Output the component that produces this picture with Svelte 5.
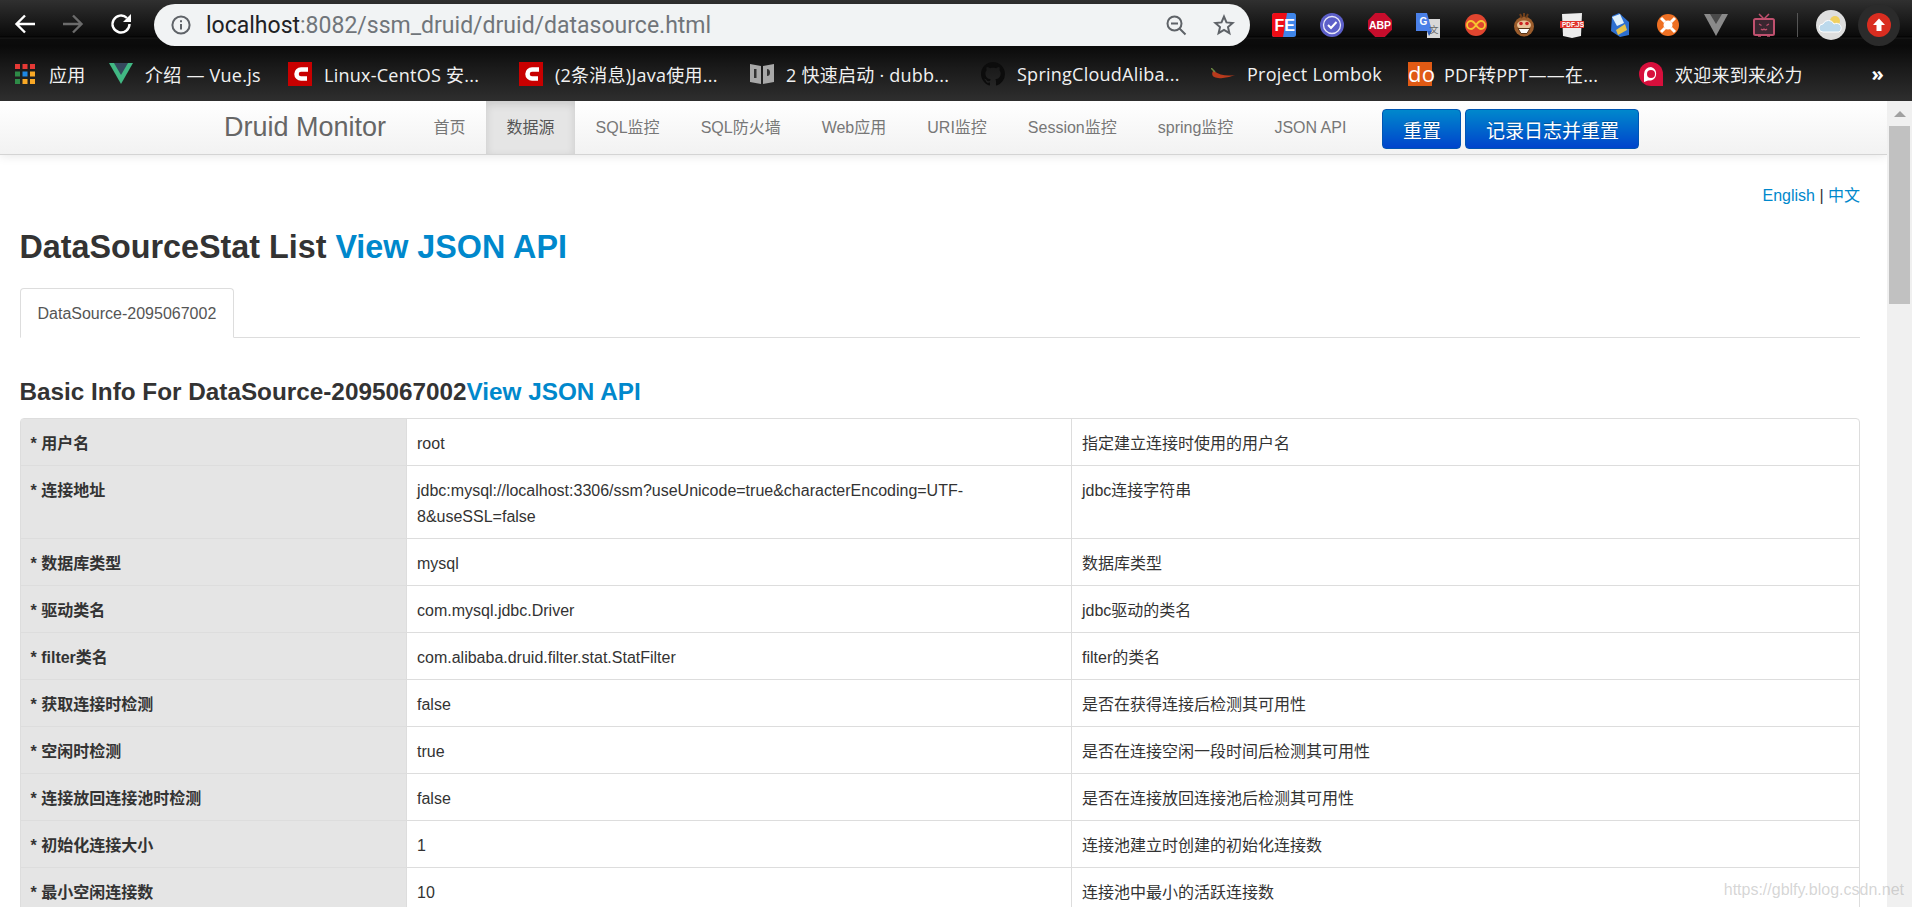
<script>
  const navItems = ['首页', '数据源', 'SQL监控', 'SQL防火墙', 'Web应用', 'URI监控', 'Session监控', 'spring监控', 'JSON API'];

  const bookmarks = [
    { icon: 'apps', label: '应用', width: 94 },
    { icon: 'vue', label: '介绍 — Vue.js', width: 179 },
    { icon: 'csdn', label: 'Linux-CentOS 安...', width: 231 },
    { icon: 'csdn', label: '(2条消息)Java使用...', width: 231 },
    { icon: 'book', label: '2 快速启动 · dubb...', width: 231 },
    { icon: 'github', label: 'SpringCloudAliba...', width: 230 },
    { icon: 'chili', label: 'Project Lombok', width: 197 },
    { icon: 'do', label: 'PDF转PPT——在...', width: 231 },
    { icon: 'laibi', label: '欢迎来到来必力', width: 200 }
  ];

  const appColors = ['#e53935', '#e53935', '#e53935', '#2e8b47', '#1e88e5', '#f9a825', '#2e8b47', '#f9a825', '#f9a825'];

  const rows = [
    ['用户名', 'root', '指定建立连接时使用的用户名'],
    ['连接地址', 'jdbc:mysql://localhost:3306/ssm?useUnicode=true&characterEncoding=UTF-8&useSSL=false', 'jdbc连接字符串'],
    ['数据库类型', 'mysql', '数据库类型'],
    ['驱动类名', 'com.mysql.jdbc.Driver', 'jdbc驱动的类名'],
    ['filter类名', 'com.alibaba.druid.filter.stat.StatFilter', 'filter的类名'],
    ['获取连接时检测', 'false', '是否在获得连接后检测其可用性'],
    ['空闲时检测', 'true', '是否在连接空闲一段时间后检测其可用性'],
    ['连接放回连接池时检测', 'false', '是否在连接放回连接池后检测其可用性'],
    ['初始化连接大小', '1', '连接池建立时创建的初始化连接数'],
    ['最小空闲连接数', '10', '连接池中最小的活跃连接数']
  ];
</script>

<div class="window">
  <header class="toolbar">
    <div class="navbtns">
      <svg width="24" height="24" viewBox="0 0 24 24"><path d="M22 12H4M12 3.500L3.500 12l8.500 8.500" fill="none" stroke="#fff" stroke-width="2.400"/></svg>
      <svg width="24" height="24" viewBox="0 0 24 24"><path d="M2 12h18M12 3.500l8.500 8.500-8.500 8.500" fill="none" stroke="#6b6b6b" stroke-width="2.400"/></svg>
      <svg width="24" height="24" viewBox="0 0 24 24"><path d="M20.500 12a8.500 8.500 0 1 1-2.500-6" fill="none" stroke="#fff" stroke-width="2.400"/><path d="M22 2v8h-8z" fill="#fff"/></svg>
    </div>
    <div class="omnibox">
      <svg class="info" width="20" height="20" viewBox="0 0 20 20"><circle cx="10" cy="10" r="8.600" fill="none" stroke="#5f6368" stroke-width="2"/><path d="M10 9v5.500M10 5.300v1.900" stroke="#5f6368" stroke-width="2"/></svg>
      <span class="url"><b>localhost</b>:8082/ssm_druid/druid/datasource.html</span>
      <svg width="22" height="22" viewBox="0 0 22 22"><circle cx="9.500" cy="9.500" r="7" fill="none" stroke="#5f6368" stroke-width="2"/><path d="M6 9.500h7M14.500 14.500l6 6" stroke="#5f6368" stroke-width="2" fill="none"/></svg>
      <svg class="star" width="22" height="22" viewBox="0 0 22 22"><path d="M11 2.600l2.500 5.800 6.200.6-4.700 4.100 1.400 6.100L11 15.900l-5.400 3.300L7 13.100 2.300 9l6.200-.6z" fill="none" stroke="#5f6368" stroke-width="2"/></svg>
    </div>
    <div class="extensions">
      <span class="slot"><svg width="24" height="24" viewBox="0 0 24 24"><rect width="24" height="24" rx="2.500" fill="#3f86ea"/><path d="M2.500 0H15l-4 24H2.500A2.500 2.500 0 0 1 0 21.500v-19A2.500 2.500 0 0 1 2.500 0z" fill="#ee0d16"/><text x="2.500" y="18" font-size="16" font-weight="700" fill="#fff" font-family="Liberation Sans">FE</text></svg></span>
      <span class="slot"><svg width="24" height="24" viewBox="0 0 24 24"><circle cx="12" cy="12" r="12" fill="#5c5fc9"/><circle cx="12" cy="12" r="8.500" fill="none" stroke="#e8e8f8" stroke-width="1.300"/><path d="M8 12l3 3 5.500-6" fill="none" stroke="#fff" stroke-width="2"/></svg></span>
      <span class="slot"><span class="abp">ABP</span></span>
      <span class="slot"><svg width="24" height="25" viewBox="0 0 24 25"><path d="M11 6h13v19H11z" fill="#d8d8d8"/><path d="M0 0h11l5 18H0z" fill="#4a80e8"/><path d="M11 18h5l-3 5z" fill="#2f5fbf"/><text x="3.500" y="12" font-size="10" font-weight="700" fill="#fff" font-family="Liberation Sans">G</text><text x="13.500" y="20" font-size="9" fill="#666" font-family="Noto Sans CJK SC">文</text></svg></span>
      <span class="slot"><svg width="24" height="24" viewBox="0 0 24 24"><circle cx="12" cy="12" r="11" fill="#e0452f"/><path d="M12 12c-2-3-3.500-4-5-4a4 4 0 0 0 0 8c1.500 0 3-1 5-4zm0 0c2 3 3.500 4 5 4a4 4 0 0 0 0-8c-1.500 0-3 1-5 4z" fill="none" stroke="#f7c531" stroke-width="1.800"/></svg></span>
      <span class="slot"><svg width="22" height="24" viewBox="0 0 22 24"><circle cx="11" cy="13.500" r="10" fill="#9c5d2c"/><path d="M7 1l2 4M11 0v4M15 1l-2 4" stroke="#6e3f1c" stroke-width="2"/><ellipse cx="11" cy="12" rx="7" ry="4.500" fill="#e8c39a"/><circle cx="8" cy="10.500" r="1.800" fill="#c22"/><circle cx="14" cy="10.500" r="1.800" fill="#c22"/><path d="M5 15.500h12l-3 5H8z" fill="#fff" stroke="#5a3518"/></svg></span>
      <span class="slot"><svg width="24" height="25" viewBox="0 0 24 25"><path d="M2 1l20-1-1 23-9 2-9-2z" fill="#ececec"/><path d="M0 8h24v7H0z" fill="#e0332b"/><text x="2" y="13.600" font-size="6.500" font-weight="700" fill="#fff" font-family="Liberation Sans">PDF.JS</text></svg></span>
      <span class="slot"><svg width="22" height="26" viewBox="0 0 22 26"><path d="M3 4l7-3 10 9v13l-9 2-9-6z" fill="#2d6fd0"/><path d="M3 5l8-3 4 9-7 3z" fill="#dff0fb"/><path d="M7 18l9-6 2 6-9 5z" fill="#e8c34a"/></svg></span>
      <span class="slot"><svg width="24" height="24" viewBox="0 0 24 24"><circle cx="12" cy="12" r="11" fill="#ee7023"/><circle cx="12" cy="12" r="4.500" fill="#fff"/><path d="M5 5l4 4M19 5l-4 4M5 19l4-4M19 19l-4-4" stroke="#fff" stroke-width="3"/></svg></span>
      <span class="slot"><svg width="24" height="22" viewBox="0 0 24 22"><path d="M0 0h24L12 22z" fill="#8a8a8a"/><path d="M6 0h12l-6 10z" fill="#4a4a4a"/></svg></span>
      <span class="slot"><svg width="22" height="24" viewBox="0 0 22 24"><path d="M6 1l5 5 5-5" fill="none" stroke="#c0506e" stroke-width="1.500"/><rect x="1" y="6" width="20" height="16" rx="1.500" fill="#3a2630" stroke="#c0506e" stroke-width="2"/><path d="M5 23h3M14 23h3" stroke="#c0506e" stroke-width="1.500"/><path d="M6 11l2.500 1.500M16 11l-2.500 1.500M8 16q1.500 1.500 3 0 1.500 1.500 3 0" fill="none" stroke="#c0506e" stroke-width="1.200"/></svg></span>
      <span class="sep"></span>
      <span class="slot"><svg width="30" height="30" viewBox="0 0 30 30"><circle cx="15" cy="15" r="15" fill="#dedede"/><circle cx="19" cy="11" r="5" fill="#f0d060"/><path d="M7 22a4 4 0 0 1 0-8 6 6 0 0 1 11 0 4 4 0 0 1 5 8z" fill="#bcd9ec" stroke="#fff"/></svg></span>
      <span class="slot"><span class="update"><svg width="24" height="24" viewBox="0 0 24 24"><circle cx="12" cy="12" r="12" fill="#d92d20"/><path d="M12 5.500l6 6.500h-3.500v6h-5v-6H6z" fill="#fff"/></svg></span></span>
    </div>
  </header>

  <nav class="bookmarks">
    {#each bookmarks as b}
      <span class="bookmark" style="width: {b.width}px">
        {#if b.icon === 'apps'}
          <svg class="bm-icon apps" width="20" height="20" viewBox="0 0 20 20">
            {#each appColors as color, i}
              <rect x={(i % 3) * 7.500} y={Math.floor(i / 3) * 7.500} width="5" height="5" fill={color} />
            {/each}
          </svg>
        {:else if b.icon === 'vue'}
          <svg class="bm-icon" width="24" height="21" viewBox="0 0 24 21"><path d="M0 0h24L12 21z" fill="#41b883"/><path d="M5 0h14l-7 12z" fill="#35495e"/></svg>
        {:else if b.icon === 'csdn'}
          <svg class="bm-icon" width="24" height="24" viewBox="0 0 24 24"><rect width="24" height="24" fill="#c80000"/><path d="M20 7.500h-7a4.500 4.500 0 0 0 0 9h6" fill="none" stroke="#fff" stroke-width="4.500"/></svg>
        {:else if b.icon === 'book'}
          <svg class="bm-icon" width="24" height="22" viewBox="0 0 24 22"><path d="M0 1l11 2v18L0 19zM24 1l-11 2v18l11-2z" fill="#a8a8a8"/><path d="M4 6v9h2.500V6zM17 6q3 0 3 3.500T17 13z" fill="#333"/></svg>
        {:else if b.icon === 'github'}
          <svg class="bm-icon" width="24" height="24" viewBox="0 0 16 16"><path fill="#0c0c0c" d="M8 0C3.580 0 0 3.580 0 8c0 3.540 2.290 6.530 5.470 7.590.4.070.55-.17.55-.38 0-.19-.01-.82-.01-1.490-2.010.37-2.530-.49-2.690-.94-.09-.23-.48-.94-.82-1.130-.28-.15-.68-.52-.01-.53.63-.01 1.080.58 1.230.82.72 1.210 1.870.87 2.330.66.07-.52.28-.87.51-1.070-1.780-.2-3.640-.89-3.640-3.950 0-.87.31-1.590.82-2.150-.08-.2-.36-1.020.08-2.120 0 0 .67-.21 2.200.82.640-.18 1.320-.27 2-.27s1.360.09 2 .27c1.530-1.040 2.200-.82 2.200-.82.440 1.100.16 1.920.08 2.120.510.560.820 1.270.820 2.150 0 3.070-1.870 3.750-3.650 3.950.290.250.540.730.540 1.480 0 1.070-.010 1.930-.010 2.200 0 .210.150.460.550.380A8.010 8.010 0 0 0 16 8c0-4.420-3.580-8-8-8z"/></svg>
        {:else if b.icon === 'chili'}
          <svg class="bm-icon" width="24" height="12" viewBox="0 0 24 12"><path d="M3 3q8 6 21 4-9 4-17 3T2 3z" fill="#b83a1c"/><path d="M0 0l4 4" stroke="#6d8a43" stroke-width="1.500"/></svg>
        {:else if b.icon === 'do'}
          <span class="bm-icon doicon">do</span>
        {:else}
          <svg class="bm-icon" width="24" height="24" viewBox="0 0 24 24"><path d="M12 0a12 12 0 0 1 12 12v12H12a12 12 0 0 1 0-24z" fill="#d70f3c"/><path d="M12 5a7 7 0 0 1 0 13.500H9L5 20v-8a7 7 0 0 1 7-7z" fill="#fff"/><circle cx="12" cy="12" r="4" fill="#d70f3c"/></svg>
        {/if}
        <span>{b.label}</span>
      </span>
    {/each}
    <span class="more">»</span>
  </nav>

  <div class="viewport">
    <main class="page">
      <div class="navbar">
        <span class="brand">Druid Monitor</span>
        <ul class="nav">
          {#each navItems as item, i}
            <li class:active={i === 1}>{item}</li>
          {/each}
        </ul>
        <button class="btn">重置</button>
        <button class="btn">记录日志并重置</button>
      </div>

      <div class="content">
        <div class="lang"><span class="link">English</span> | <span class="link">中文</span></div>
        <h2>DataSourceStat List <span class="link">View JSON API</span></h2>
        <div class="tabs"><span class="tab">DataSource-2095067002</span></div>
        <h3>Basic Info For DataSource-2095067002<span class="link">View JSON API</span></h3>
        <table>
          <tbody>
            {#each rows as row}
              <tr>
                <th>* {row[0]}</th>
                <td class="val">{row[1]}</td>
                <td>{row[2]}</td>
              </tr>
            {/each}
          </tbody>
        </table>
      </div>
    </main>
    <div class="scrollbar">
      <span class="arrow"></span>
      <span class="thumb"></span>
    </div>
    <span class="watermark">https://gblfy.blog.csdn.net</span>
  </div>
</div>

<style>
  :global(body) {
    margin: 0;
    overflow: hidden;
  }

  .window {
    width: 1912px;
    height: 907px;
    display: flex;
    flex-direction: column;
    overflow: hidden;
    font-family: "Liberation Sans", "Noto Sans CJK SC", sans-serif;
  }

  .toolbar {
    height: 46px;
    display: flex;
    align-items: center;
    background: linear-gradient(#303030 0, #0a0a0a 36px, #000 37px, #1c1c1c 38px, #0c0c0c 39px, #0a0a0a 46px);
    box-sizing: border-box;
    padding-top: 4px;
  }

  .navbtns {
    display: flex;
    gap: 24px;
    margin-left: 13px;
    width: 141px;
    flex-shrink: 0;
    margin-top: -2px;
  }

  .omnibox {
    width: 1096px;
    height: 42px;
    border-radius: 21px;
    background: #f1f3f4;
    display: flex;
    align-items: center;
    padding: 0 15px 0 17px;
    box-sizing: border-box;
    flex-shrink: 0;
  }

  .url {
    margin-left: 15px;
    font-family: "Roboto", "Liberation Sans", sans-serif;
    font-size: 23px;
    color: #70757a;
    flex: 1;
  }

  .url b {
    font-weight: 400;
    color: #202124;
  }

  .star {
    margin-left: 26px;
  }

  .extensions {
    display: flex;
    align-items: center;
    margin-left: 10px;
  }

  .slot {
    width: 48px;
    display: flex;
    align-items: center;
    justify-content: center;
    flex-shrink: 0;
  }

  .abp {
    width: 24px;
    height: 24px;
    display: flex;
    align-items: center;
    justify-content: center;
    font-size: 10.500px;
    font-weight: 700;
    color: #fff;
    background: #c70d2c;
    clip-path: polygon(30% 0, 70% 0, 100% 30%, 100% 70%, 70% 100%, 30% 100%, 0 70%, 0 30%);
  }

  .sep {
    width: 1px;
    height: 24px;
    background: #555;
    margin: 0 9px;
    flex-shrink: 0;
  }

  .update {
    width: 42px;
    height: 42px;
    border-radius: 21px;
    display: flex;
    align-items: center;
    justify-content: center;
    background: #2b2b2b;
  }

  .bookmarks {
    height: 55px;
    display: flex;
    align-items: center;
    background: linear-gradient(#0a0a0a 0, #1a1a1a 40%, #2e2e2e 100%);
    color: #f1f1f1;
    font-family: "Open Sans", "Noto Sans CJK SC", sans-serif;
    font-size: 18px;
    letter-spacing: 0.25px;
    padding-left: 15px;
    box-sizing: border-box;
  }

  .bookmark {
    display: flex;
    align-items: center;
    gap: 12px;
    white-space: nowrap;
    flex-shrink: 0;
  }

  .bm-icon {
    flex-shrink: 0;
    display: block;
  }

  .apps {
    margin-right: 2px;
  }

  .doicon {
    width: 24px;
    height: 24px;
    background: #e05a14;
    color: #fff;
    font-size: 22px;
    line-height: 23px;
    text-align: center;
  }

  .more {
    margin-left: auto;
    padding-right: 28px;
    font-size: 20px;
    font-weight: 700;
    color: #fff;
  }

  .viewport {
    flex: 1;
    display: flex;
    min-height: 0;
    position: relative;
  }

  .page {
    flex: 1;
    min-width: 0;
    background: #fff;
    overflow: hidden;
  }

  .navbar {
    height: 54px;
    box-sizing: border-box;
    padding-left: 224px;
    display: flex;
    align-items: flex-start;
    background: linear-gradient(#fff, #f2f2f2);
    border-bottom: 1px solid #d4d4d4;
    box-shadow: 0 1px 10px rgba(0, 0, 0, 0.1);
    position: relative;
  }

  .brand {
    font-size: 27px;
    line-height: 52px;
    color: #666;
    margin-right: 27px;
  }

  .nav {
    list-style: none;
    display: flex;
    margin: 0;
    padding: 0;
  }

  .nav li {
    height: 53px;
    line-height: 53px;
    padding: 0 20.500px;
    font-size: 16px;
    color: #777;
    white-space: nowrap;
  }

  .nav li.active {
    background: #e5e5e5;
    box-shadow: inset 0 3px 8px rgba(0, 0, 0, 0.125);
    color: #555;
  }

  .btn {
    margin: 8px 4px 0 0;
    height: 40px;
    padding: 0 19.500px;
    border: 1px solid #0055b3;
    border-radius: 4px;
    background: linear-gradient(#0088cc, #0044cc);
    color: #fff;
    font-family: inherit;
    font-size: 19px;
    text-shadow: 0 -1px 0 rgba(0, 0, 0, 0.25);
    box-sizing: border-box;
  }

  .nav + .btn {
    margin-left: 15.500px;
  }

  .content {
    padding: 0 27px 0 19.500px;
    color: #333;
  }

  .link {
    color: #0088cc;
  }

  .lang {
    text-align: right;
    font-size: 16px;
    line-height: 26px;
    padding-top: 28px;
  }

  h2 {
    margin: 13px 0 0;
    font-size: 32.300px;
    line-height: 50px;
    font-weight: 700;
  }

  .tabs {
    margin-top: 16px;
    height: 50px;
    box-sizing: border-box;
    border-bottom: 1px solid #ddd;
  }

  .tab {
    display: inline-block;
    box-sizing: border-box;
    height: 50px;
    padding: 0 17px;
    line-height: 50px;
    font-size: 16px;
    color: #555;
    background: #fff;
    border: 1px solid #ddd;
    border-bottom-color: #fff;
    border-radius: 4px 4px 0 0;
  }

  h3 {
    margin: 29px 0 0;
    font-size: 24.300px;
    line-height: 50px;
    font-weight: 700;
  }

  table {
    width: 100%;
    margin-top: 1px;
    border-collapse: separate;
    border-spacing: 0;
    table-layout: fixed;
    border: 1px solid #ddd;
    border-radius: 4px;
    font-size: 16px;
    line-height: 26px;
  }

  th, td {
    box-sizing: border-box;
    padding: 12px 11px 8px 10px;
    text-align: left;
    vertical-align: top;
    border-left: 1px solid #ddd;
    border-top: 1px solid #ddd;
    font-weight: 400;
  }

  tr:first-child th, tr:first-child td {
    border-top: 0;
  }

  th {
    width: 385.500px;
    border-left: 0;
    background: #e5e5e5;
    font-weight: 700;
  }

  td.val {
    width: 665px;
  }

  .watermark {
    position: absolute;
    right: 8px;
    bottom: 8px;
    font-size: 16px;
    color: rgba(150, 150, 150, 0.4);
    white-space: nowrap;
  }

  .scrollbar {
    width: 25px;
    background: #f0f0f0;
    flex-shrink: 0;
    display: flex;
    flex-direction: column;
    align-items: center;
  }

  .arrow {
    margin-top: 10px;
    width: 0;
    height: 0;
    border-left: 6px solid transparent;
    border-right: 6px solid transparent;
    border-bottom: 6px solid #a0a0a0;
  }

  .thumb {
    margin-top: 9px;
    width: 21px;
    height: 178px;
    background: #c1c1c1;
  }
</style>
